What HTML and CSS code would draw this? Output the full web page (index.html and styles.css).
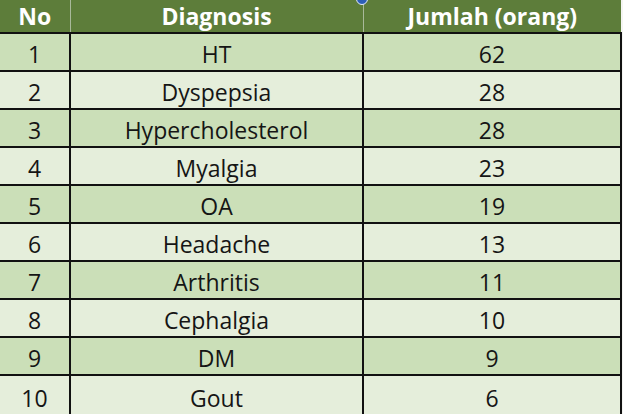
FILE: index.html
```html
<!DOCTYPE html>
<html>
<head>
<meta charset="utf-8">
<link rel="stylesheet" href="styles.css">
</head>
<body>
<div class="sheet">
<table class="grid">
<colgroup><col class="c1"><col class="c2"><col class="c3"></colgroup>
<thead>
<tr><th>No</th><th>Diagnosis</th><th>Jumlah (orang)</th></tr>
</thead>
<tbody>
<tr class="odd"><td>1</td><td>HT</td><td>62</td></tr>
<tr class="even"><td>2</td><td>Dyspepsia</td><td>28</td></tr>
<tr class="odd"><td>3</td><td>Hypercholesterol</td><td>28</td></tr>
<tr class="even"><td>4</td><td>Myalgia</td><td>23</td></tr>
<tr class="odd"><td>5</td><td>OA</td><td>19</td></tr>
<tr class="even"><td>6</td><td>Headache</td><td>13</td></tr>
<tr class="odd"><td>7</td><td>Arthritis</td><td>11</td></tr>
<tr class="even"><td>8</td><td>Cephalgia</td><td>10</td></tr>
<tr class="odd"><td>9</td><td>DM</td><td>9</td></tr>
<tr class="even last"><td>10</td><td>Gout</td><td>6</td></tr>
</tbody>
</table>
<span class="handle"></span>
</div>
</body>
</html>
```
FILE: styles.css
```css
html, body {
  margin: 0;
  padding: 0;
  background: #f4f5f2;
}
.sheet {
  position: relative;
  width: 623px;
  height: 414px;
  overflow: hidden;
}
.grid {
  border-collapse: collapse;
  table-layout: fixed;
  width: 621px;
  font-family: "Open Sans", "Liberation Sans", sans-serif;
}
.c1 { width: 70px; }
.c2 { width: 293px; }
.c3 { width: 258px; }
th {
  box-sizing: border-box;
  height: 33px;
  padding: 1px 0 0;
  background: #5d7d3a;
  color: #ffffff;
  font-size: 23px;
  font-weight: 700;
  text-align: center;
  vertical-align: middle;
  line-height: 31px;
  border-bottom: 2px solid #111;
  border-left: 1px solid #a9b99a;
}
th:first-child { border-left: none; }
td {
  box-sizing: border-box;
  height: 36px;
  padding: 5px 0 0;
  text-align: center;
  vertical-align: middle;
  font-size: 23px;
  color: #151515;
  line-height: 31px;
  border-bottom: 2px solid #111;
  border-left: 2px solid #111;
}
td:first-child { border-left: none; }
td:last-child { border-right: 2px solid #111; }
.last td { border-bottom: none; height: 40px; }
.odd td { background: #cbdfb8; }
.even td { background: #e5eedb; }
.handle {
  position: absolute;
  left: 356px;
  top: -7px;
  width: 10px;
  height: 10px;
  border-radius: 50%;
  background: #2d5fb8;
  border: 1px solid #e8eef8;
}
```
